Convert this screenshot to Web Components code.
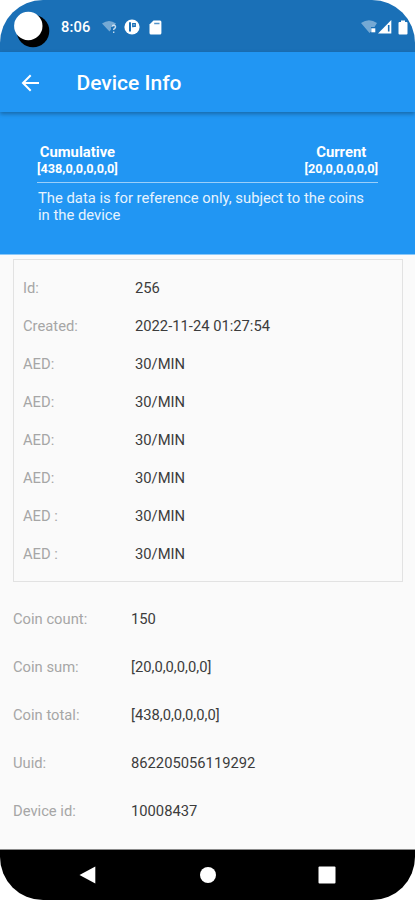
<!DOCTYPE html>
<html lang="en">
<head>
<meta charset="utf-8">
<title>Device Info</title>
<style>
	html, body {
		margin: 0;
		background: #fff;
	}
	body {
		font-family: Roboto, "Liberation Sans", sans-serif;
	}
</style>
</head>
<body>
<phone-screen>
	<status-bar slot="top" time="8:06"></status-bar>
	<app-bar slot="top">Device Info</app-bar>
	<coin-summary>
		<coin-stat label="Cumulative">[438,0,0,0,0,0]</coin-stat>
		<coin-stat label="Current">[20,0,0,0,0,0]</coin-stat>
		<span slot="note">The data is for reference only, subject to the coins in the device</span>
	</coin-summary>
	<info-card>
		<info-row label="Id:">256</info-row>
		<info-row label="Created:">2022-11-24 01:27:54</info-row>
		<info-row label="AED:">30/MIN</info-row>
		<info-row label="AED:">30/MIN</info-row>
		<info-row label="AED:">30/MIN</info-row>
		<info-row label="AED:">30/MIN</info-row>
		<info-row label="AED :">30/MIN</info-row>
		<info-row label="AED :">30/MIN</info-row>
	</info-card>
	<info-list>
		<info-row label="Coin count:">150</info-row>
		<info-row label="Coin sum:">[20,0,0,0,0,0]</info-row>
		<info-row label="Coin total:">[438,0,0,0,0,0]</info-row>
		<info-row label="Uuid:">862205056119292</info-row>
		<info-row label="Device id:">10008437</info-row>
	</info-list>
	<nav-bar slot="bottom"></nav-bar>
</phone-screen>

<script>
class UIElement extends HTMLElement {
	connectedCallback() {
		let templateEl = document.createElement('template');
		templateEl.innerHTML = this.markup();
		let shadow = this.attachShadow({ mode: "open" });
		shadow.appendChild(templateEl.content.cloneNode(true));

		// Copy the attributes into the elements that ask for them.
		shadow.querySelectorAll('[data-attr]').forEach(el => {
			el.textContent = this.getAttribute(el.dataset.attr);
		});
	}
}

class PhoneScreen extends UIElement {
	markup() {
		return `
			<style>
				:host {
					display: flex;  flex-direction: column;
					width: 415px;  height: 900px;
					border-radius: 43px;
					overflow: hidden;
					background: #fafafa;
				}
				main { flex: 1;  min-height: 0; }
			</style>
			<slot name="top"></slot>
			<main><slot></slot></main>
			<slot name="bottom"></slot>
			`;
	}
}

class StatusBar extends UIElement {
	markup() {
		return `
			<style>
				:host {
					display: flex;  align-items: center;
					box-sizing: border-box;
					height: 52px;  flex: none;
					padding: 2px 7px 0 13px;
					background: #1a70b7;
					color: #fff;
				}
				.camera { width: 38px;  height: 38px;  margin-top: 5px; }
				.time {
					margin-left: 10px;  width: 42px;
					font-size: 14.7px;  font-weight: 500;  letter-spacing: 0.15px;
				}
				.wifi { width: 15px;  height: 14px;  margin-left: -1px; }
				.app { width: 16px;  height: 16px;  margin-left: 7px; }
				.card { width: 13px;  height: 15px;  margin-left: 9px; }
				.signal { width: 32px;  height: 16px;  margin-left: auto; }
				.battery { width: 10px;  height: 15px;  margin-left: 5px; }
			</style>
			<svg class="camera" viewBox="0 0 38 38">
				<circle cx="20" cy="20" r="16.3" fill="#000"/>
				<circle cx="15.3" cy="15" r="14.2" fill="#fff"/>
			</svg>
			<span class="time" data-attr="time"></span>
			<svg class="wifi" viewBox="0 0 15 14">
				<path d="M0 3.5Q7 -1.5 14 3.5L12.5 5.5H9V9.5L7.5 11.5Z" fill="#fff" opacity=".4"/>
				<path d="M9.7 6.7Q10.2 5.3 11.8 5.3Q13.6 5.4 13.5 7Q13.3 8 12.3 8.6Q11.6 9 11.7 10M11.7 11.5V13" fill="none" stroke="#fff" stroke-width="1.4" opacity=".75"/>
			</svg>
			<svg class="app" viewBox="0 0 16 16">
				<circle cx="8" cy="8" r="7.6" fill="#fff"/>
				<path d="M6 3.2V12.5" stroke="#1a70b7" stroke-width="2"/>
				<path d="M8.8 4V8.3M8.8 4.6H11.2V7.3H8.8" fill="none" stroke="#1a70b7" stroke-width="1.4"/>
			</svg>
			<svg class="card" viewBox="0 0 13 15">
				<path d="M4.5 .5H11Q12.4 .5 12.4 2V13Q12.4 14.5 11 14.5H2Q.5 14.5 .5 13V4.5Z" fill="#fff"/>
				<path d="M5.2 3.5H10.5" stroke="#1a70b7" stroke-width="1.5" opacity=".75"/>
			</svg>
			<svg class="signal" viewBox="0 0 32 16">
				<path d="M0 4Q8 -1.5 16 4L13.5 8H10V12.5L8.5 14Z" fill="#fff" opacity=".4"/>
				<rect x="10.3" y="9.3" width="4" height="4" fill="#fff"/>
				<path d="M30.3 1V14.5H17Z" fill="#fff"/>
				<path d="M27.7 6V12.5" stroke="#1a70b7" stroke-width="1.6"/>
			</svg>
			<svg class="battery" viewBox="0 0 10 15">
				<path d="M3 .5H7V2H8.500Q9.5 2 9.5 3V13.500Q9.5 14.500 8.5 14.500H1.500Q.5 14.500 .5 13.500V3Q.5 2 1.500 2H3Z" fill="#fff"/>
			</svg>
			`;
	}
}

class AppBar extends UIElement {
	markup() {
		return `
			<style>
				:host {
					display: flex;  align-items: center;
					box-sizing: border-box;
					height: 60px;  flex: none;
					padding: 2px 21px 0;
					background: #2196f3;
					color: #fff;
					box-shadow: 0 2px 4px rgba(0, 0, 0, .3);
					z-index: 1;
				}
				svg { width: 18px;  height: 18px; }
				h1 { margin: 0 0 0 37.5px;  font-size: 21px;  font-weight: 500; }
			</style>
			<svg viewBox="0 0 18 18">
				<path d="M18 9H2M9.7 1.3L2 9L9.7 16.7" fill="none" stroke="#fff" stroke-width="2"/>
			</svg>
			<h1><slot></slot></h1>
			`;
	}
}

class CoinSummary extends UIElement {
	markup() {
		return `
			<style>
				:host {
					display: block;
					box-sizing: border-box;
					height: 143px;
					padding: 32px 37px 0 37px;
					background: #2196f3;
					border-bottom: 1px solid #8ac8f9;
					color: #fff;
				}
				.stats {
					display: flex;  justify-content: space-between;
					height: 38px;
					border-bottom: 1px solid rgba(255, 255, 255, .55);
				}
				p {
					margin: 7px 10px 0 1px;
					font-size: 14.8px;  line-height: 17px;
					color: #e6f3fe;
				}
			</style>
			<div class="stats"><slot></slot></div>
			<p><slot name="note"></slot></p>
			`;
	}
}

class CoinStat extends UIElement {
	markup() {
		return `
			<style>
				:host { display: block;  text-align: center;  font-weight: 700; }
				.label { font-size: 14.8px;  line-height: 17px; }
				.value { font-size: 12.7px;  line-height: 15px; }
			</style>
			<div class="label" data-attr="label"></div>
			<div class="value"><slot></slot></div>
			`;
	}
}

class InfoCard extends UIElement {
	markup() {
		return `
			<style>
				:host {
					display: block;
					box-sizing: border-box;
					height: 323px;
					margin: 4px 12px 0 13px;
					padding: 9px;
					border: 1px solid #e2e2e2;
					--row-height: 38px;
					--label-width: 112px;
				}
			</style>
			<slot></slot>
			`;
	}
}

class InfoList extends UIElement {
	markup() {
		return `
			<style>
				:host {
					display: block;
					padding: 13px 13px 0;
					--row-height: 48.1px;
					--label-width: 118px;
				}
			</style>
			<slot></slot>
			`;
	}
}

class InfoRow extends UIElement {
	markup() {
		return `
			<style>
				:host {
					display: flex;  align-items: center;
					height: var(--row-height);
					font-size: 14.75px;
				}
				.label { width: var(--label-width);  color: #a6a6a6; }
				.value { color: #3c3c3c; }
			</style>
			<span class="label" data-attr="label"></span>
			<span class="value"><slot></slot></span>
			`;
	}
}

class NavBar extends UIElement {
	markup() {
		return `
			<style>
				:host {
					display: flex;  align-items: center;  justify-content: space-between;
					box-sizing: border-box;
					height: 51px;  flex: none;
					padding: 0 79px;
					background: #000;
					border-top: 1px solid #8a8a8a;
				}
				svg { width: 18px;  height: 18px;  fill: #fff; }
			</style>
			<svg viewBox="0 0 18 18"><path d="M16.3 .5V17.5L.5 9Z"/></svg>
			<svg viewBox="0 0 18 18"><circle cx="9" cy="9" r="8"/></svg>
			<svg viewBox="0 0 18 18"><rect x=".5" y=".5" width="17" height="17" rx="1"/></svg>
			`;
	}
}

customElements.define("phone-screen", PhoneScreen);
customElements.define("status-bar", StatusBar);
customElements.define("app-bar", AppBar);
customElements.define("coin-summary", CoinSummary);
customElements.define("coin-stat", CoinStat);
customElements.define("info-card", InfoCard);
customElements.define("info-list", InfoList);
customElements.define("info-row", InfoRow);
customElements.define("nav-bar", NavBar);
</script>
</body>
</html>
